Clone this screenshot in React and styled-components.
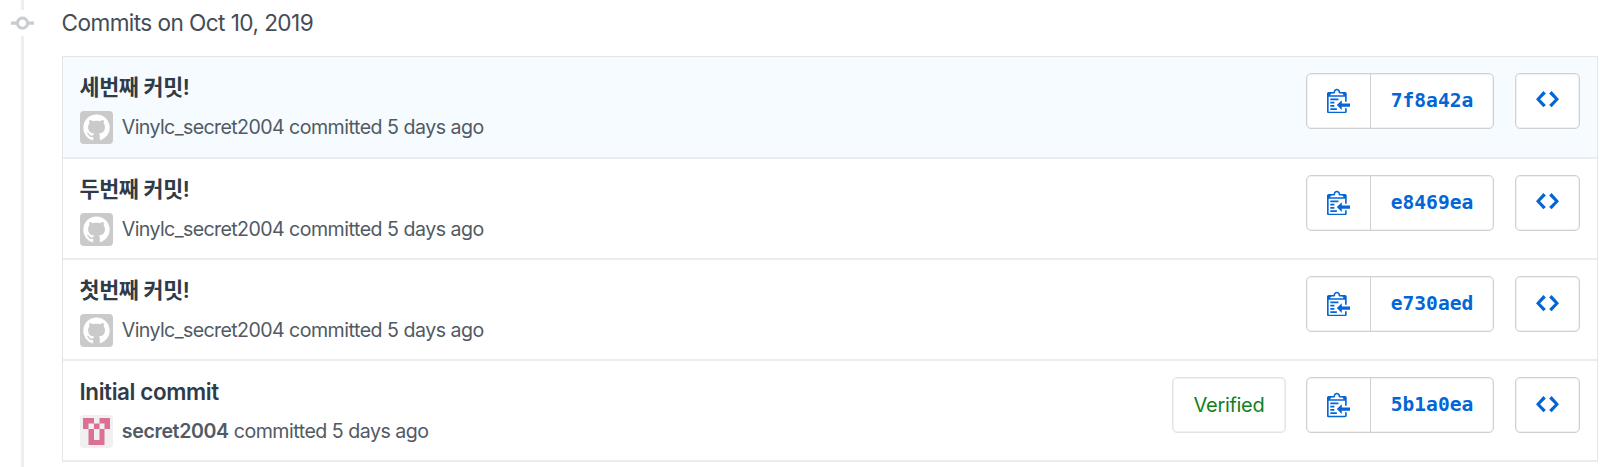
import React from "react";
import styled, { createGlobalStyle } from "styled-components";

const Global = createGlobalStyle`
  * { box-sizing: border-box; }
  body {
    margin: 0;
    background: #fff;
    overflow: hidden;
    font-family: Inter, "Noto Sans CJK KR", sans-serif;
    color: #444d56;
  }
`;

const Page = styled.main`
  display: flex;
  width: 1600px;
  height: 467px;
  overflow: hidden;
`;

const Timeline = styled.div`
  width: 62px;
  padding-left: 11px;
  display: flex;
  flex-direction: column;
`;

const Line = styled.div`
  width: 3px;
  margin-left: 10px;
  background: #ebeef2;
  flex: ${(p) => (p.$fill ? 1 : "0 0 10px")};
`;

const Node = styled.div`
  height: 26px;
  color: #c8cdd3;
  svg { display: block; }
`;

const Content = styled.section`
  width: 1536px;
`;

const Heading = styled.h2`
  margin: 0;
  height: 56px;
  line-height: 46px;
  font-size: 22.6px;
  font-weight: 400;
  letter-spacing: -0.57px;
  text-indent: -0.5px;
  white-space: nowrap;
`;

const List = styled.ol`
  list-style: none;
  margin: 0;
  padding: 0;
  border: 1px solid #e2e6ea;
  border-bottom: 2px solid #eaecef;
`;

const Commit = styled.li`
  display: flex;
  justify-content: space-between;
  height: 101.2px;
  padding: 16px 17px 0 16.5px;
  background: ${(p) => (p.$active ? "#f6fbff" : "#fff")};
  &:first-child { height: 100px; }
  & + & { border-top: 2px solid #eaecef; }
  &:last-child { height: 100.6px; }
`;

const Title = styled.p`
  margin: 0;
  height: 38px;
  line-height: 29px;
  font-size: ${(p) => (p.$latin ? "22.4px" : "21.8px")};
  font-weight: 600;
  letter-spacing: ${(p) => (p.$latin ? "-0.38px" : "-0.4px")};
  color: #2f3b47;
  white-space: nowrap;
`;

const Meta = styled.div`
  display: flex;
  align-items: center;
  height: 33px;
  gap: 9.3px;
  font-size: 19.6px;
  letter-spacing: -0.5px;
  color: #515a64;
  white-space: nowrap;
`;

const Byline = styled.span`
  padding-bottom: 2px;
`;

const Author = styled.span`
  font-weight: ${(p) => (p.$strong ? 600 : 400)};
  letter-spacing: ${(p) => (p.$strong ? "-0.38px" : "-0.62px")};
`;

const Avatar = styled.svg`
  width: 33px;
  height: 33px;
  border-radius: 4px;
  background: ${(p) => p.$bg};
`;

const Actions = styled.div`
  display: flex;
  height: 56px;
`;

const Box = styled.div`
  display: flex;
  align-items: center;
  justify-content: center;
  height: 56px;
  background: #fff;
  border: 1px solid #cfd1d3;
  box-shadow: inset 0 0 0 1px #f0f1f1;
  border-radius: 5px;
  color: #0366d6;
`;

const Badge = styled(Box)`
  width: 114px;
  margin-right: 20px;
  border-color: #e1e4e8;
  color: #128020;
  font-size: 20px;
  letter-spacing: -0.3px;
`;

const HashGroup = styled(Box)`
  width: 188px;
  margin-right: 21px;
`;

const CopyButton = styled.div`
  width: 64px;
  height: 100%;
  padding-bottom: 2px;
  display: flex;
  align-items: center;
  justify-content: center;
  border-right: 1px solid #cfd1d3;
`;

const Hash = styled.span`
  flex: 1;
  padding-bottom: 1px;
  text-align: center;
  font: bold 19.6px "DejaVu Sans Mono", monospace;
`;

const BrowseButton = styled(Box)`
  width: 65px;
  padding-bottom: 3px;
`;

const paths = {
  node: "M10.86 7c-.45-1.72-2-3-3.86-3-1.86 0-3.41 1.28-3.86 3H0v2h3.14c.45 1.72 2 3 3.86 3 1.86 0 3.41-1.28 3.86-3H14V7h-3.14zM7 10.2c-1.22 0-2.2-.98-2.2-2.2 0-1.22.98-2.2 2.2-2.2 1.22 0 2.2.98 2.2 2.2 0 1.22-.98 2.2-2.2 2.2z",
  copy: "M2 13h4v1H2v-1zm5-6H2v1h5V7zm2 3V8l-3 3 3 3v-2h5v-2H9zM4.5 9H2v1h2.5V9zM2 12h2.5v-1H2v1zm9 1h1v2c-.02.28-.11.52-.3.7-.19.18-.42.28-.7.3H1c-.55 0-1-.45-1-1V4c0-.55.45-1 1-1h3c0-1.11.89-2 2-2 1.11 0 2 .89 2 2h3c.55 0 1 .45 1 1v5h-1V6H1v9h10v-2zM2 5h8c0-.55-.45-1-1-1H8c-.55 0-1-.45-1-1s-.45-1-1-1-1 .45-1 1-.45 1-1 1H3c-.55 0-1 .45-1 1z",
  code: "M9.5 3L8 4.5 11.5 8 8 11.5 9.5 13 14 8 9.5 3zm-5 0L0 8l4.5 5L6 11.5 2.5 8 6 4.5 4.5 3z",
};

const Icon = ({ name }) => (
  <svg width="23" height="26.3" viewBox="0 0 14 16" fill="currentColor">
    <path d={paths[name]} />
  </svg>
);

const CatAvatar = () => (
  <Avatar $bg="#cacaca" viewBox="0 0 20 20">
    <path
      fill="#fff"
      transform="translate(2 2.1)"
      d="M8 0C3.58 0 0 3.58 0 8c0 3.54 2.29 6.53 5.47 7.59.4.07.55-.17.55-.38 0-.19-.01-.82-.01-1.49-2.01.37-2.53-.49-2.69-.94-.09-.23-.48-.94-.82-1.13-.28-.15-.68-.52-.01-.53.63-.01 1.08.58 1.23.82.72 1.21 1.87.87 2.33.66.07-.52.28-.87.51-1.07-1.78-.2-3.64-.89-3.64-3.95 0-.87.31-1.59.82-2.15-.08-.2-.36-1.02.08-2.12 0 0 .67-.21 2.2.82.64-.18 1.32-.27 2-.27.68 0 1.36.09 2 .27 1.53-1.04 2.2-.82 2.2-.82.44 1.1.16 1.92.08 2.12.51.56.82 1.27.82 2.15 0 3.07-1.87 3.75-3.65 3.95.29.25.54.73.54 1.48 0 1.07-.01 1.93-.01 2.2 0 .21.15.46.55.38A8.013 8.013 0 0 0 16 8c0-4.42-3.58-8-8-8z"
    />
  </Avatar>
);

const PixelAvatar = () => (
  <Avatar $bg="#f0f0f0" viewBox="0 0 33 33">
    <path
      fill="#db7093"
      d="M3 3h11v5.500h5.500V3H30v11h-5.500v16h-16V14H3zM8.500 8.500V14H14V8.500zM19.500 8.500V14h5V8.500zM14 14v11h5.500V14z"
      fillRule="evenodd"
    />
  </Avatar>
);

const commits = [
  { title: "세번째 커밋!", author: "Vinylc_secret2004", hash: "7f8a42a", active: true },
  { title: "두번째 커밋!", author: "Vinylc_secret2004", hash: "e8469ea" },
  { title: "첫번째 커밋!", author: "Vinylc_secret2004", hash: "e730aed" },
  { title: "Initial commit", author: "secret2004", hash: "5b1a0ea", verified: true },
];

export default function App() {
  return (
    <>
      <Global />
      <Page>
        <Timeline>
          <Line />
          <Node><Icon name="node" /></Node>
          <Line $fill />
        </Timeline>
        <Content>
          <Heading>Commits on Oct 10, 2019</Heading>
          <List>
            {commits.map((c) => (
              <Commit key={c.hash} $active={c.active}>
                <div>
                  <Title $latin={c.verified}>{c.title}</Title>
                  <Meta>
                    {c.verified ? <PixelAvatar /> : <CatAvatar />}
                    <Byline>
                      <Author $strong={c.verified}>{c.author}</Author> committed 5 days ago
                    </Byline>
                  </Meta>
                </div>
                <Actions>
                  {c.verified && <Badge>Verified</Badge>}
                  <HashGroup>
                    <CopyButton><Icon name="copy" /></CopyButton>
                    <Hash>{c.hash}</Hash>
                  </HashGroup>
                  <BrowseButton><Icon name="code" /></BrowseButton>
                </Actions>
              </Commit>
            ))}
          </List>
        </Content>
      </Page>
    </>
  );
}
